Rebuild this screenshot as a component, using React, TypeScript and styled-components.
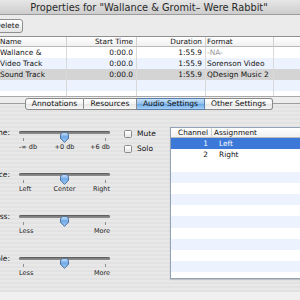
import React from "react";
import styled, { createGlobalStyle } from "styled-components";

const FONT = `"DejaVu Sans", "Liberation Sans", sans-serif`;

const Global = createGlobalStyle`
  html, body { margin: 0; padding: 0; width: 300px; height: 300px; overflow: hidden; background: #ededed; }
  #root { width: 300px; height: 300px; overflow: hidden; }
  * { box-sizing: border-box; }
`;

const Window = styled.div`
  width: 346px;
  height: 300px;
  margin-left: -24px;
  display: flex;
  flex-direction: column;
  font-family: ${FONT};
  color: #111;
`;

const TitleBar = styled.div`
  flex: none;
  height: 15px;
  border-bottom: 1px solid #9c9c9c;
  background: linear-gradient(#e6e6e6, #cdcdcd);
  display: flex;
  align-items: center;
  justify-content: center;
  font-size: 9.8px;
  color: #2a2a2a;
  white-space: nowrap;
`;

const Toolbar = styled.div`
  flex: none;
  height: 21px;
  padding: 4px 0 0 15px;
  background: #ebebeb;
  display: flex;
  align-items: flex-start;
`;

const ToolButton = styled.div`
  height: 14px;
  padding: 0 3px;
  border: 1px solid #8e8e8e;
  border-radius: 3px;
  background: linear-gradient(#ffffff, #e4e4e4);
  font-size: 7.4px;
  line-height: 12px;
  white-space: nowrap;
`;

const TrackTable = styled.div`
  flex: none;
  height: 61px;
  border-top: 1px solid #8f8f8f;
  border-bottom: 1px solid #a9a9a9;
  background: #fff;
  overflow: hidden;
`;

const Grid = styled.div`
  display: grid;
  grid-template-columns: 21px 70px 70px 69px 68px 1fr;
`;

const HeadCell = styled.div<{ $align?: string; $pad?: number }>`
  height: 10px;
  border-bottom: 1px solid #b9b9b9;
  border-right: 1px solid #d0d0d0;
  background: linear-gradient(#ffffff, #f0f0f0);
  font-size: 7.3px;
  line-height: 9px;
  text-align: ${(p) => p.$align || "left"};
  padding: 0 ${(p) => (p.$align === "right" ? 3 : 0)}px 0 ${(p) => p.$pad ?? 3}px;
  white-space: nowrap;
  overflow: hidden;
`;

const Cell = styled.div<{ $bg: string; $align?: string; $pad?: number; $muted?: boolean }>`
  height: 11px;
  background: ${(p) => p.$bg};
  border-right: 1px solid #d9d9d9;
  font-size: 7.4px;
  line-height: 11px;
  color: ${(p) => (p.$muted ? "#9a9a9a" : "#111")};
  text-align: ${(p) => p.$align || "left"};
  padding: 0 ${(p) => (p.$align === "right" ? 3 : 0)}px 0 ${(p) => p.$pad ?? 3}px;
  white-space: nowrap;
  overflow: hidden;
`;

const Panel = styled.div`
  flex: none;
  height: 195px;
  padding: 6px 8px 0 8px;
  background: #ededed;
`;

const TabBox = styled.div`
  height: 189px;
  border-top: 1px solid #9d9d9d;
  border-left: 1px solid #c4c4c4;
  border-right: 1px solid #c4c4c4;
  background: repeating-linear-gradient(180deg, #e8e8e8 0px, #e8e8e8 2px, #e2e2e2 2px, #e2e2e2 4px);
  display: flex;
  flex-direction: column;
`;

const TabStrip = styled.div`
  margin-top: -6px;
  display: flex;
  justify-content: center;
  height: 12px;
`;

const Tab = styled.div<{ $w: number; $active?: boolean; $first?: boolean; $last?: boolean }>`
  width: ${(p) => p.$w}px;
  height: 12px;
  border: 1px solid #8a8a8a;
  border-left-width: ${(p) => (p.$first ? 1 : 0)}px;
  border-radius: ${(p) => (p.$first ? "3px 0 0 3px" : p.$last ? "0 3px 3px 0" : "0")};
  background: ${(p) =>
    p.$active
      ? "linear-gradient(#c6e0f8 0%, #93c2ee 45%, #6fabe7 55%, #a9d1f5 100%)"
      : "linear-gradient(#ffffff 0%, #f3f3f3 50%, #e6e6e6 55%, #f6f6f6 100%)"};
  border-color: ${(p) => (p.$active ? "#5a7fae" : "#8a8a8a")};
  font-size: 7.6px;
  line-height: 10px;
  text-align: center;
  white-space: nowrap;
  color: #111;
`;

const TabContent = styled.div`
  display: flex;
  align-items: flex-start;
`;

const SliderColumn = styled.div`
  padding-top: 18px;
  display: flex;
  flex-direction: column;
`;

const SliderGroup = styled.div`
  height: 42px;
  display: grid;
  grid-template-columns: 25px 91px;
  column-gap: 9px;
  align-items: start;
`;

const GroupLabel = styled.div`
  display: flex;
  justify-content: flex-end;
  white-space: nowrap;
  font-size: 7.5px;
  line-height: 10px;
`;

const SliderBlock = styled.div`
  display: flex;
  flex-direction: column;
`;

const TrackRow = styled.div`
  position: relative;
  height: 11px;
  padding-top: 3px;
`;

const Track = styled.div`
  height: 3px;
  border-radius: 2px;
  background: linear-gradient(#5f5f5f, #a3a3a3);
  box-shadow: inset 0 0 0 0.5px rgba(0, 0, 0, 0.2);
`;

const ThumbWrap = styled.div`
  position: absolute;
  top: 0;
  width: 11px;
  height: 11px;
`;

const TickRow = styled.div`
  margin-top: -1px;
  height: 3px;
  padding: 0 4px;
  display: flex;
  justify-content: space-between;
`;

const Tick = styled.div`
  width: 1px;
  height: 3px;
  background: #8d8d8d;
`;

const ScaleLabels = styled.div`
  margin-top: 2px;
  display: grid;
  grid-template-columns: 1fr auto 1fr;
  font-size: 6.5px;
  line-height: 8px;
  color: #222;
  white-space: nowrap;
`;

const ScaleLabel = styled.span<{ $pos: "start" | "center" | "end" }>`
  justify-self: ${(p) => p.$pos};
  grid-column: ${(p) => (p.$pos === "start" ? 1 : p.$pos === "center" ? 2 : 3)};
`;

const CheckColumn = styled.div`
  margin-left: 14px;
  padding-top: 18px;
  width: 46px;
  display: flex;
  flex-direction: column;
  gap: 4px;
`;

const CheckRow = styled.div`
  display: flex;
  align-items: center;
  gap: 5px;
  height: 11px;
  font-size: 7.5px;
  white-space: nowrap;
`;

const Box = styled.div`
  width: 8px;
  height: 8px;
  flex: none;
  border: 1px solid #8a8a8a;
  border-radius: 1.5px;
  background: linear-gradient(#ffffff, #e6e6e6);
`;

const ChannelTable = styled.div`
  margin-top: 17px;
  width: 136px;
  height: 152px;
  border: 1px solid #94a2b8;
  box-shadow: 0 1px 1px rgba(0, 0, 0, 0.15);
  background: #fff;
  overflow: hidden;
`;

const ChanGrid = styled.div`
  display: grid;
  grid-template-columns: 41px 1fr;
  grid-auto-rows: 11.2px;
  grid-template-rows: 10px;
`;

const ChanHead = styled.div<{ $align?: string; $pad: string }>`
  border-bottom: 1px solid #bcbcbc;
  border-right: 1px solid #d0d0d0;
  background: linear-gradient(#ffffff, #f1f1f1);
  font-size: 7.3px;
  line-height: 9px;
  padding: ${(p) => p.$pad};
  text-align: ${(p) => p.$align || "left"};
  white-space: nowrap;
`;

const ChanCell = styled.div<{ $bg: string; $sel?: boolean; $align?: string; $pad: string }>`
  background: ${(p) => p.$bg};
  color: ${(p) => (p.$sel ? "#fff" : "#111")};
  font-size: 7.4px;
  line-height: 11px;
  padding: ${(p) => p.$pad};
  text-align: ${(p) => p.$align || "left"};
  white-space: nowrap;
`;

const BottomStrip = styled.div`
  flex: 1;
  background: #f0f0f0;
`;

const Thumb = () => (
  <svg width="11" height="11" viewBox="0 0 11 11">
    <defs>
      <linearGradient id="thumbg" x1="0" y1="0" x2="0" y2="1">
        <stop offset="0" stopColor="#d7e9fb" />
        <stop offset="0.45" stopColor="#6ea8e8" />
        <stop offset="1" stopColor="#a5d0f6" />
      </linearGradient>
    </defs>
    <path
      d="M1.5 3.2 Q1.5 0.6 4.2 0.6 H6.8 Q9.5 0.6 9.5 3.2 V6.2 L5.5 10.4 L1.5 6.2 Z"
      fill="url(#thumbg)"
      stroke="#3f6594"
      strokeWidth="0.9"
    />
  </svg>
);

type SliderProps = { label: string; value: number; scale: [string, string | null, string] };

const Slider = ({ label, value, scale }: SliderProps) => (
  <SliderGroup>
    <GroupLabel>{label}</GroupLabel>
    <SliderBlock>
      <TrackRow>
        <Track />
        <ThumbWrap style={{ left: `${value * 80}px` }}>
          <Thumb />
        </ThumbWrap>
      </TrackRow>
      <TickRow>
        <Tick />
        {scale[1] !== null && <Tick />}
        <Tick />
      </TickRow>
      <ScaleLabels>
        <ScaleLabel $pos="start">{scale[0]}</ScaleLabel>
        {scale[1] !== null && <ScaleLabel $pos="center">{scale[1]}</ScaleLabel>}
        <ScaleLabel $pos="end">{scale[2]}</ScaleLabel>
      </ScaleLabels>
    </SliderBlock>
  </SliderGroup>
);

const tracks = [
  { name: "Wallance &", start: "0:00.0", dur: "1:55.9", fmt: "-NA-", muted: true, bg: "#ffffff" },
  { name: "Video Track", start: "0:00.0", dur: "1:55.9", fmt: "Sorenson Video", bg: "#edf3fe" },
  { name: "Sound Track", start: "0:00.0", dur: "1:55.9", fmt: "QDesign Music 2", bg: "#d4d4d4" },
  { name: "", start: "", dur: "", fmt: "", bg: "#edf3fe" },
  { name: "", start: "", dur: "", fmt: "", bg: "#ffffff" },
];

const channels: { ch: string; as: string }[] = [
  { ch: "1", as: "Left" },
  { ch: "2", as: "Right" },
];

const chanRowBg = (i: number) => {
  if (i === 0) return "#3b78d8";
  if (i < 3) return "#ffffff";
  return i % 2 === 1 ? "#edf3fe" : "#ffffff";
};

export default function App() {
  const chanRows = Array.from({ length: 13 }, (_, i) => i);
  return (
    <>
      <Global />
      <Window>
        <TitleBar>{'Properties for "Wallance & Gromit\u2013 Were Rabbit"'}</TitleBar>
        <Toolbar>
          <ToolButton>Delete</ToolButton>
        </Toolbar>
        <TrackTable>
          <Grid>
            <HeadCell />
            <HeadCell>Name</HeadCell>
            <HeadCell $align="right">Start Time</HeadCell>
            <HeadCell $align="right">Duration</HeadCell>
            <HeadCell $pad={1}>Format</HeadCell>
            <HeadCell />
            {tracks.map((t, i) => (
              <React.Fragment key={i}>
                <Cell $bg={t.bg} />
                <Cell $bg={t.bg}>{t.name}</Cell>
                <Cell $bg={t.bg} $align="right">{t.start}</Cell>
                <Cell $bg={t.bg} $align="right">{t.dur}</Cell>
                <Cell $bg={t.bg} $pad={1} $muted={t.muted}>{t.fmt}</Cell>
                <Cell $bg={t.bg} />
              </React.Fragment>
            ))}
          </Grid>
        </TrackTable>
        <Panel>
          <TabBox>
            <TabStrip>
              <Tab $w={59} $first>Annotations</Tab>
              <Tab $w={53}>Resources</Tab>
              <Tab $w={68} $active>Audio Settings</Tab>
              <Tab $w={68} $last>Other Settings</Tab>
            </TabStrip>
            <TabContent>
              <SliderColumn>
                <Slider label="Volume:" value={0.5} scale={["-\u221e db", "+0 db", "+6 db"]} />
                <Slider label="Balance:" value={0.5} scale={["Left", "Center", "Right"]} />
                <Slider label="Bass:" value={0.5} scale={["Less", null, "More"]} />
                <Slider label="Treble:" value={0.5} scale={["Less", null, "More"]} />
              </SliderColumn>
              <CheckColumn>
                <CheckRow>
                  <Box />
                  Mute
                </CheckRow>
                <CheckRow>
                  <Box />
                  Solo
                </CheckRow>
              </CheckColumn>
              <ChannelTable>
                <ChanGrid>
                  <ChanHead $align="right" $pad="0 3px 0 0">Channel</ChanHead>
                  <ChanHead $pad="0 0 0 2px">Assignment</ChanHead>
                  {chanRows.map((i) => (
                    <React.Fragment key={i}>
                      <ChanCell $bg={chanRowBg(i)} $sel={i === 0} $align="right" $pad="0 4px 0 0">
                        {channels[i]?.ch ?? ""}
                      </ChanCell>
                      <ChanCell $bg={chanRowBg(i)} $sel={i === 0} $pad="0 0 0 7px">
                        {channels[i]?.as ?? ""}
                      </ChanCell>
                    </React.Fragment>
                  ))}
                </ChanGrid>
              </ChannelTable>
            </TabContent>
          </TabBox>
        </Panel>
        <BottomStrip />
      </Window>
    </>
  );
}
